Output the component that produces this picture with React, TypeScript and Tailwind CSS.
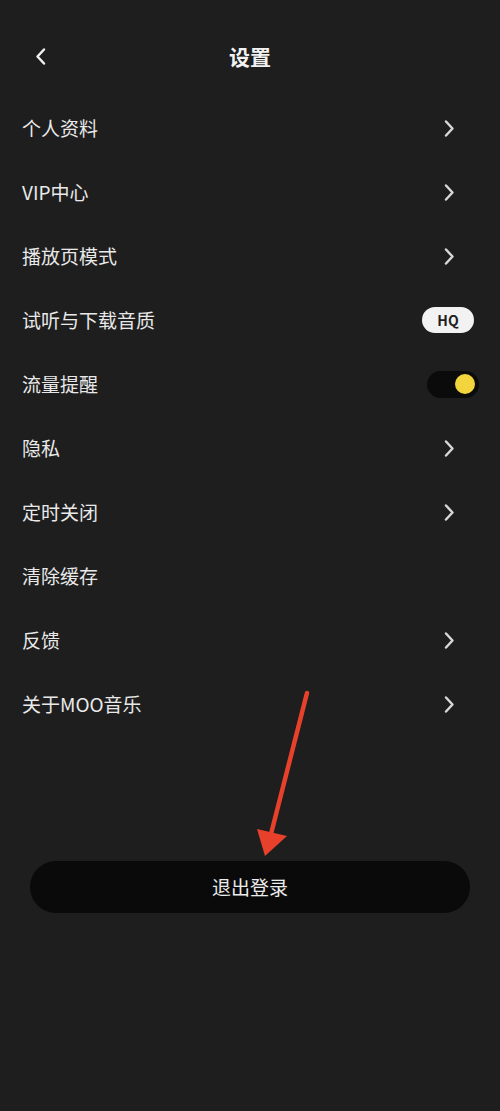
import React from "react";

type Row = {
    label: string;
    kind: "link" | "hq" | "toggle" | "plain";
};

const rows: Row[] = [
    { label: "个人资料", kind: "link" },
    { label: "VIP中心", kind: "link" },
    { label: "播放页模式", kind: "link" },
    { label: "试听与下载音质", kind: "hq" },
    { label: "流量提醒", kind: "toggle" },
    { label: "隐私", kind: "link" },
    { label: "定时关闭", kind: "link" },
    { label: "清除缓存", kind: "plain" },
    { label: "反馈", kind: "link" },
    { label: "关于MOO音乐", kind: "link" },
];

const Chevron = ({ flip = false }: { flip?: boolean }) => (
    <svg
        width="12"
        height="19"
        viewBox="0 0 12 19"
        fill="none"
        stroke="currentColor"
        strokeWidth="2.5"
        strokeLinecap="round"
        strokeLinejoin="round"
        className={flip ? "rotate-180" : ""}
    >
        <path d="M3 2.5l6.5 7L3 16.5" />
    </svg>
);

const SettingRow = ({ row }: { row: Row }) => (
    <div className="flex h-16 items-center justify-between pl-[22px] pr-[26px]">
        <span className="text-[19px] text-[#e9e9e9]">{row.label}</span>
        {row.kind === "link" && (
            <span className="mr-[19px] text-[#d6d6d6]">
                <Chevron />
            </span>
        )}
        {row.kind === "hq" && (
            <span className="flex h-[26px] w-[52px] items-center justify-center rounded-full bg-[#f2f2f2] text-[14px] font-bold text-[#1e1e1e]">
                HQ
            </span>
        )}
        {row.kind === "toggle" && (
            <span className="-mr-[5px] flex h-[27px] w-[52px] items-center justify-end rounded-full bg-[#0b0b0b] pr-[4px]">
                <span className="h-[20px] w-[20px] rounded-full bg-[#f2d53c]" />
            </span>
        )}
    </div>
);

export default function App() {
    return (
        <div
            className="relative min-h-[1111px] w-full bg-[#1e1e1e]"
            style={{ fontFamily: '"Noto Sans CJK SC", "Noto Sans", sans-serif' }}
        >
            <header className="relative flex h-[96px] items-center justify-center pt-[18px]">
                <span className="absolute left-[35px] top-[47px] text-[#f0f0f0]">
                    <Chevron flip />
                </span>
                <h1 className="text-[21px] font-bold text-[#f2f2f2]">设置</h1>
            </header>

            <div>
                {rows.map((row) => (
                    <SettingRow key={row.label} row={row} />
                ))}
            </div>

            <div className="mx-[30px] mt-[125px]">
                <button className="flex h-[52px] w-full items-center justify-center rounded-full bg-[#0a0a0a] text-[19px] text-[#ececec]">
                    退出登录
                </button>
            </div>

            {/* red annotation arrow pointing at the logout button */}
            <svg
                className="pointer-events-none absolute left-0 top-0"
                width="500"
                height="1111"
                viewBox="0 0 500 1111"
            >
                <line x1="307" y1="693" x2="271" y2="834" stroke="#e8412b" strokeWidth="4.5" strokeLinecap="round" />
                <polygon points="257,829 287,836 265,856" fill="#e8412b" />
            </svg>
        </div>
    );
}
